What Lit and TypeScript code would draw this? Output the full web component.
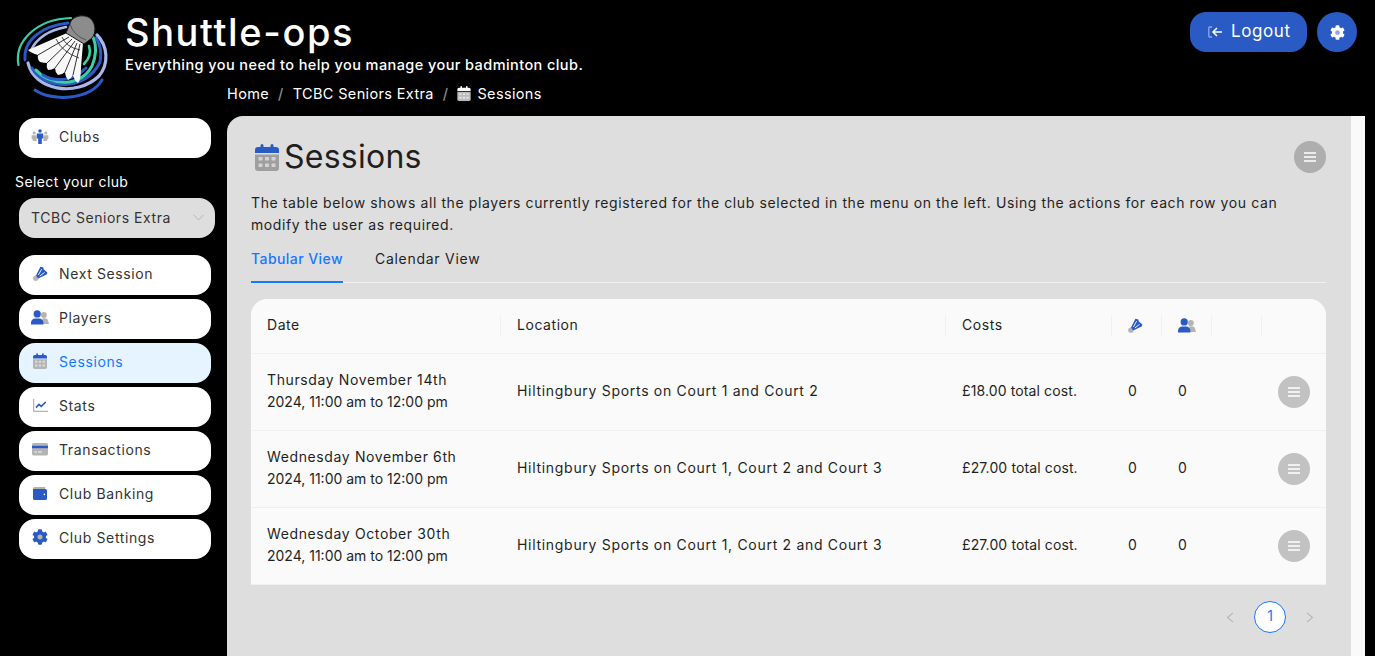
import { LitElement, html, css, svg, unsafeCSS } from 'lit';
import { customElement } from 'lit/decorators.js';

const BLUE = '#2a5bc4';
const GREY = '#b4b4b4';

const COG =
  'M487.4 315.7l-42.6-24.6c4.3-23.2 4.3-47 0-70.2l42.6-24.6c4.9-2.8 7.1-8.6 5.5-14-11.1-35.6-30-67.8-54.7-94.6-3.8-4.1-10-5.1-14.8-2.3L380.8 110c-17.9-15.4-38.5-27.3-60.8-35.1V25.8c0-5.6-3.9-10.5-9.4-11.7-36.7-8.2-74.3-7.8-109.2 0-5.5 1.2-9.4 6.1-9.4 11.7V75c-22.2 7.9-42.8 19.8-60.8 35.1L88.7 85.5c-4.9-2.8-11-1.9-14.8 2.3-24.7 26.7-43.6 58.9-54.7 94.6-1.7 5.4.6 11.2 5.5 14L67.3 221c-4.3 23.2-4.3 47 0 70.2l-42.6 24.6c-4.9 2.8-7.1 8.6-5.5 14 11.1 35.6 30 67.8 54.7 94.6 3.8 4.1 10 5.1 14.8 2.3l42.6-24.6c17.9 15.4 38.5 27.3 60.8 35.1v49.2c0 5.6 3.9 10.5 9.4 11.7 36.7 8.2 74.3 7.8 109.2 0 5.5-1.2 9.4-6.1 9.4-11.7v-49.2c22.2-7.9 42.8-19.8 60.8-35.1l42.6 24.6c4.9 2.8 11 1.9 14.8-2.3 24.7-26.7 43.6-58.9 54.7-94.6 1.5-5.5-.7-11.3-5.6-14.1zM256 336c-44.1 0-80-35.9-80-80s35.9-80 80-80 80 35.9 80 80-35.9 80-80 80z';

const cogIcon = (fill: string, centre: string, size = 16) => html`<svg width=${size} height=${size} viewBox="0 0 512 512">
  <circle cx="256" cy="256" r="100" fill=${centre}></circle><path d=${COG} fill=${fill}></path>
</svg>`;

const calendarIcon = (top: string, body: string, w = 14, h = 16) => html`<svg width=${w} height=${h} viewBox="0 0 24 27">
  <path d="M0 10.5h24V24a3 3 0 0 1-3 3H3a3 3 0 0 1-3-3z" fill=${body}></path>
  <path d="M3 3h2.5V1.5a1.5 1.5 0 0 1 3 0V3h7V1.5a1.5 1.5 0 0 1 3 0V3H21a3 3 0 0 1 3 3v3H0V6a3 3 0 0 1 3-3z" fill=${top}></path>
  <g fill="#fff" opacity=".55">
    <rect x="3.5" y="13" width="4" height="3.4" rx=".6"></rect><rect x="10" y="13" width="4" height="3.4" rx=".6"></rect><rect x="16.5" y="13" width="4" height="3.4" rx=".6"></rect>
    <rect x="3.5" y="19.5" width="4" height="3.4" rx=".6"></rect><rect x="10" y="19.5" width="4" height="3.4" rx=".6"></rect><rect x="16.5" y="19.5" width="4" height="3.4" rx=".6"></rect>
  </g>
</svg>`;

const shuttleIcon = () => html`<svg width="15" height="15" viewBox="0 0 15 15">
  <circle cx="2.8" cy="12.2" r="2.6" fill=${GREY}></circle>
  <path d="M3 9.6 7.4.8 10.4 1.4 10.6 3.2 14.4 6.4 13.6 8.6 5.2 12.4z" fill=${BLUE}></path>
  <path d="M5.4 9 8.6 3.2M6.8 10 11.6 6.4" stroke="#fff" stroke-width=".9" fill="none"></path>
</svg>`;

const playersIcon = () => html`<svg width="18" height="15" viewBox="0 0 18 15">
  <circle cx="12.8" cy="5" r="3" fill=${GREY}></circle>
  <path d="M10 14h8l-1-3.6c-.4-1.4-1.6-2.2-3-2.2h-2.4z" fill=${GREY}></path>
  <circle cx="6.2" cy="3.9" r="3.6" fill=${BLUE}></circle>
  <path d="M0 14.4v-1.6c0-2.6 2-4.3 4.2-4.3h4c2.2 0 4.2 1.7 4.2 4.3v1.6z" fill=${BLUE}></path>
</svg>`;

const clubsIcon = () => html`<svg width="18" height="15" viewBox="0 0 18 15">
  <g fill=${GREY}>
    <circle cx="3.2" cy="4" r="1.6"></circle><circle cx="14.8" cy="4" r="1.6"></circle>
    <path d="M.6 6.2h5V12H2l-.6-2H.6zM12.4 6.2h5V10h-.8l-.6 2h-3.6z"></path>
  </g>
  <circle cx="9" cy="2" r="1.8" fill=${BLUE}></circle>
  <path d="M5.8 4.6h6.4v5h-1.4V15H7.2V9.6H5.8z" fill=${BLUE}></path>
</svg>`;

const statsIcon = () => html`<svg width="15" height="13" viewBox="0 0 15 13">
  <path d="M.6 0v11.6a.8.8 0 0 0 .8.8H15" fill="none" stroke=${GREY} stroke-width="1.4"></path>
  <path d="M3 8.6 6 5.4l2.2 2L12.8 3" fill="none" stroke=${BLUE} stroke-width="1.6"></path>
</svg>`;

const cardIcon = () => html`<svg width="16" height="13" viewBox="0 0 16 13">
  <rect width="16" height="12.4" rx="1.6" fill=${GREY}></rect>
  <rect y="2.8" width="16" height="2.4" fill=${BLUE}></rect>
  <rect x="2.4" y="8.4" width="2.6" height="1.2" fill="#fff" opacity=".7"></rect>
  <rect x="6" y="8.4" width="4" height="1.2" fill="#fff" opacity=".7"></rect>
</svg>`;

const walletIcon = () => html`<svg width="14" height="13" viewBox="0 0 14 13">
  <path d="M1.6 0h10.6v3H0V1.6A1.6 1.6 0 0 1 1.6 0z" fill=${GREY}></path>
  <path d="M0 2h12.4A1.6 1.6 0 0 1 14 3.6v7.8a1.6 1.6 0 0 1-1.6 1.6H1.6A1.6 1.6 0 0 1 0 11.4z" fill=${BLUE}></path>
  <circle cx="11.4" cy="7.4" r=".8" fill="#fff"></circle>
</svg>`;

const menuIcon = () => html`<svg width="12" height="10" viewBox="0 0 12 10">
  <path d="M0 1h12M0 5h12M0 9h12" stroke="#fff" stroke-width="1.4"></path>
</svg>`;

/* coordinates are page pixels, hence the viewBox offset */
const logo = () => html`<svg class="logo" width="105" height="95" viewBox="10 10 105 95" fill="none">
  ${svg`
    <g stroke-linecap="round">
      <path d="M18.5 65C14 42 36 19 71 18" stroke="#3ccfa6" stroke-width="2.2"/>
      <path d="M35 90C52 102 90 100 102 80" stroke="#2a5bc4" stroke-width="3"/>
      <path d="M25 60C23 40 42 26 68 23" stroke="#2a5bc4" stroke-width="2.8"/>
      <path d="M28 63C34 90 76 98 99 76 109 64 108 46 97 35" stroke="#a9b8ea" stroke-width="3.2"/>
      <path d="M31 50C38 36 50 30 66 27" stroke="#a9b8ea" stroke-width="2.6"/>
      <path d="M32 68C44 90 86 92 100 62 102 52 100 44 96 38" stroke="#2a5bc4" stroke-width="3"/>
      <path d="M36 70C50 86 80 88 92 66 97 54 96 44 93 37" stroke="#3ccfa6" stroke-width="3"/>
      <path d="M43 75C54 82 72 82 86 68" stroke="#2a5bc4" stroke-width="3"/>
      <path d="M84 64C90 58 91 52 89 46" stroke="#3ccfa6" stroke-width="2.6"/>
    </g>
    <path d="M67 33 28 50Q31 53 38 55 37 59 40 62 44 63 47 63 46 67 48 70 52 70 55 68 55 72 58 75 62 75 65 72 65 76 68 80 71 79 73 75 74 80 78 83 81 80 81 67L83 43z" fill="#f8f8f8"/>
    <g stroke="#1a1a1a" stroke-width=".9">
      <path d="M38 55 69 37M47 63 72 39M55 68 75 41M65 72 77 43M73 75 80 44"/>
      <path d="M56 39Q62 52 79 58M62 37Q66 47 80 50" stroke-width=".8"/>
    </g>
    <path d="M66 33 71 21C75 15 86 14 91 19 96 24 96 33 92 38L84 44Z" fill="#8c8c8c" stroke="#1c1c1c" stroke-width="1"/>
    <path d="M70 24Q73 35 86 40" stroke="#555" stroke-width="1"/>
  `}
</svg>`;

const NAV = [
  { label: 'Next Session', icon: shuttleIcon },
  { label: 'Players', icon: playersIcon },
  { label: 'Sessions', icon: () => calendarIcon(BLUE, GREY), active: true },
  { label: 'Stats', icon: statsIcon },
  { label: 'Transactions', icon: cardIcon },
  { label: 'Club Banking', icon: walletIcon },
  { label: 'Club Settings', icon: () => cogIcon(BLUE, GREY) },
];

const ROWS = [
  { d1: 'Thursday November 14th', d2: '2024, 11:00 am to 12:00 pm', loc: 'Hiltingbury Sports on Court 1 and Court 2', cost: '£18.00 total cost.' },
  { d1: 'Wednesday November 6th', d2: '2024, 11:00 am to 12:00 pm', loc: 'Hiltingbury Sports on Court 1, Court 2 and Court 3', cost: '£27.00 total cost.' },
  { d1: 'Wednesday October 30th', d2: '2024, 11:00 am to 12:00 pm', loc: 'Hiltingbury Sports on Court 1, Court 2 and Court 3', cost: '£27.00 total cost.' },
];

@customElement('app-root')
export class AppRoot extends LitElement {
  static override styles = css`
    :host {
      display: block;
      height: 656px;
      overflow: hidden;
      background: #000;
      color: #1f1f1f;
      font-family: Inter, 'Noto Sans', sans-serif;
      font-size: 14px;
    }
    * { box-sizing: border-box; }

    .top { display: flex; height: 80px; padding-right: 18px; }
    .logo { flex: none; margin: 10px 10px 0 10px; }
    .brand { color: #fff; flex: 1; }
    .brand h1 { margin: 9px 0 0; font-size: 38px; line-height: 46px; font-weight: 500; letter-spacing: 1.6px; }
    .brand p { margin: 0; font-size: 14.5px; line-height: 20px; font-weight: 500; letter-spacing: .42px; }
    .top-actions { display: flex; gap: 10px; padding-top: 12px; }
    .logout {
      display: flex; align-items: center; gap: 8px; width: 117px; height: 40px; padding-left: 18px;
      background: ${unsafeCSS(BLUE)}; color: #fff; border-radius: 16px; font-size: 17px; letter-spacing: .6px;
    }
    .logout span { padding-bottom: 2px; }
    .gear { display: flex; align-items: center; justify-content: center; width: 40px; height: 40px; border-radius: 50%; background: ${unsafeCSS(BLUE)}; }

    .crumbs { display: flex; align-items: center; height: 36px; padding: 0 0 10px 227px; color: #fff; font-size: 14.5px; letter-spacing: .36px; }
    .crumbs .sep { margin: 0 9px; opacity: .6; }
    .crumbs svg { margin-right: 6px; }

    .main { display: flex; height: 540px; padding-right: 10px; }

    .side { flex: none; width: 227px; padding: 2px 0 0 19px; }
    .item {
      display: flex; align-items: center; width: 192px; height: 40px; padding: 0 0 4px 12px;
      background: #fff; border-radius: 16px; color: #333; letter-spacing: .62px;
    }
    .item .ic { display: flex; justify-content: center; width: 18px; margin-right: 10px; }
    .item.active { background: #e6f4ff; color: #1677ff; }
    .pick-label { margin: 14px 0 6px -4px; height: 20px; line-height: 20px; color: #fff; letter-spacing: .4px; }
    .select {
      display: flex; align-items: center; justify-content: space-between; width: 196px; height: 40px; padding: 0 11px 2px 12px;
      background: #dedede; border-radius: 16px; color: #333; letter-spacing: .55px;
    }
    .nav { display: flex; flex-direction: column; gap: 4px; margin-top: 17px; }

    .panel { flex: 1; min-width: 0; padding: 24px 25px 0 24px; background: #dedede; border-top-left-radius: 16px; }
    .strip { flex: none; width: 14px; background: #fafafa; }
    .title { display: flex; align-items: center; height: 34px; }
    .title h2 { flex: 1; margin: 0 0 2px 5px; font-size: 32px; font-weight: 400; letter-spacing: .25px; }
    .title svg { margin-left: 4px; }
    .round { display: flex; align-items: center; justify-content: center; width: 32px; height: 32px; border-radius: 50%; background: #aeaeae; }
    .round.light { background: #c2c2c2; margin-left: auto; }
    .round svg { margin: 0; }
    .lead { margin: 18px 0 0; line-height: 22px; letter-spacing: .6px; }

    .tabs { display: flex; gap: 32px; height: 47px; border-bottom: 1px solid #f0f0f0; }
    .tab { padding-top: 12px; height: 47px; line-height: 22px; letter-spacing: .72px; }
    .tab.active { color: #1677ff; font-weight: 500; border-bottom: 2px solid #1677ff; letter-spacing: .43px; }

    .table { margin-top: 16px; background: #fafafa; border-radius: 16px 16px 0 0; }
    .row { display: grid; grid-template-columns: 250px 445px 166px 50px 50px 50px 64px; align-items: center; height: 77px; border-bottom: 1px solid #f0f0f0; }
    .row.head { height: 55px; }
    .cell { padding: 0 0 2px 16px; line-height: 22px; }
    .date span { display: block; }
    .date .when { letter-spacing: .62px; }
    .date .time { letter-spacing: 0; }
    .loc { letter-spacing: .7px; }
    .cost { letter-spacing: .12px; }
    .head .cell { position: relative; display: flex; align-items: center; height: 22px; padding-bottom: 2px; letter-spacing: .55px; }
    .head .cell:not(:last-child)::after { content: ''; position: absolute; top: 0; right: 0; width: 1px; height: 22px; background: #f0f0f0; }
    .row .end { padding: 0 16px 0 0; display: flex; }

    .pager { display: flex; align-items: center; justify-content: flex-end; gap: 8px; height: 32px; margin-top: 16px; }
    .pager .arrow { display: flex; align-items: center; justify-content: center; width: 32px; height: 32px; }
    .pager .cur { width: 32px; height: 32px; line-height: 28px; text-align: center; border: 1px solid #1677ff; border-radius: 50%; background: #fff; color: #1677ff; }
  `;

  override render() {
    return html`
      <div class="top">
        ${logo()}
        <div class="brand">
          <h1>Shuttle-ops</h1>
          <p>Everything you need to help you manage your badminton club.</p>
        </div>
        <div class="top-actions">
          <div class="logout">
            <svg width="15" height="12" viewBox="0 0 15 12" fill="none">
              <path d="M4 1H1.6a.8.8 0 0 0-.8.8v8.4a.8.8 0 0 0 .8.8H4" stroke="#8aa6e6" stroke-width="1.3"></path>
              <path d="M14 6H5M9 2 5 6l4 4" stroke="#fff" stroke-width="1.5"></path>
            </svg>
            <span>Logout</span>
          </div>
          <div class="gear">${cogIcon('#fff', '#8aa6e6', 15)}</div>
        </div>
      </div>
      <div class="crumbs">
        <span>Home</span><span class="sep">/</span>
        <span>TCBC Seniors Extra</span><span class="sep">/</span>
        ${calendarIcon('#fff', '#bbb', 14, 15)}<span>Sessions</span>
      </div>
      <div class="main">
        <aside class="side">
          <div class="item"><span class="ic">${clubsIcon()}</span>Clubs</div>
          <div class="pick-label">Select your club</div>
          <div class="select">
            <span>TCBC Seniors Extra</span>
            <svg width="11" height="7" viewBox="0 0 11 7" fill="none"><path d="M.6.8 5.5 6 10.4.8" stroke="#b5b5b5" stroke-width="1"></path></svg>
          </div>
          <nav class="nav">
            ${NAV.map(
              (n) => html`<div class="item ${n.active ? 'active' : ''}"><span class="ic">${n.icon()}</span>${n.label}</div>`,
            )}
          </nav>
        </aside>
        <section class="panel">
          <div class="title">
            ${calendarIcon(BLUE, '#9f9f9f', 24, 27)}
            <h2>Sessions</h2>
            <div class="round">${menuIcon()}</div>
          </div>
          <p class="lead">
            The table below shows all the players currently registered for the club selected in the menu on the left. Using the actions for each row you can<br />modify the user as required.
          </p>
          <div class="tabs">
            <div class="tab active">Tabular View</div>
            <div class="tab">Calendar View</div>
          </div>
          <div class="table">
            <div class="row head">
              <div class="cell">Date</div>
              <div class="cell">Location</div>
              <div class="cell">Costs</div>
              <div class="cell">${shuttleIcon()}</div>
              <div class="cell">${playersIcon()}</div>
              <div class="cell"></div>
              <div class="cell"></div>
            </div>
            ${ROWS.map(
              (r) => html`<div class="row">
                <div class="cell date"><span class="when">${r.d1}</span><span class="time">${r.d2}</span></div>
                <div class="cell loc">${r.loc}</div>
                <div class="cell cost">${r.cost}</div>
                <div class="cell">0</div>
                <div class="cell">0</div>
                <div class="cell"></div>
                <div class="end"><div class="round light">${menuIcon()}</div></div>
              </div>`,
            )}
          </div>
          <div class="pager">
            <span class="arrow"><svg width="8" height="11" viewBox="0 0 8 11" fill="none"><path d="M7 .8 1.5 5.5 7 10.2" stroke="#b5b5b5" stroke-width="1.1"></path></svg></span>
            <span class="cur">1</span>
            <span class="arrow"><svg width="8" height="11" viewBox="0 0 8 11" fill="none"><path d="M1 .8 6.5 5.5 1 10.2" stroke="#b5b5b5" stroke-width="1.1"></path></svg></span>
          </div>
        </section>
        <div class="strip"></div>
      </div>
    `;
  }
}
